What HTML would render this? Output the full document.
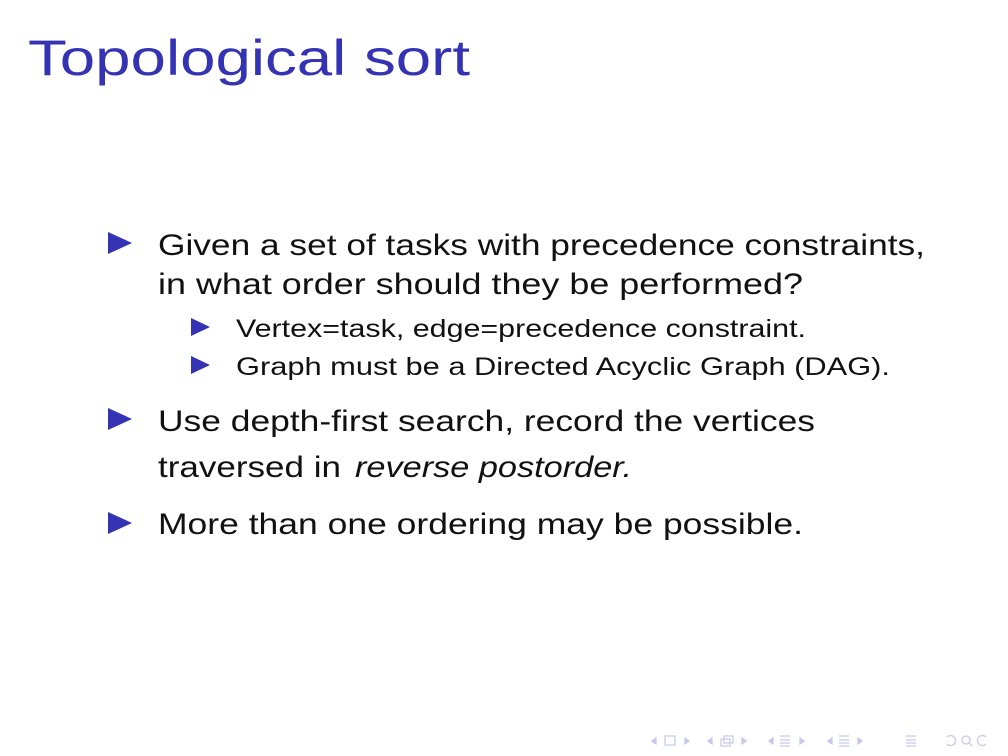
<!DOCTYPE html>
<html><head><style>
html,body{margin:0;padding:0;background:#fff;}
svg{display:block;}
text{font-family:"Liberation Sans",sans-serif;}
</style></head><body>
<svg width="1008" height="756" viewBox="0 0 1008 756" xmlns="http://www.w3.org/2000/svg">
<text x="28" y="75" font-size="50" fill="#3333b3" textLength="442" lengthAdjust="spacingAndGlyphs">Topological sort</text>
<g fill="#3333b3">
<polygon points="108,232 132,243 108,254"/>
<polygon points="108,408 132,419 108,430"/>
<polygon points="108,512 132,523 108,534"/>
<polygon points="191,318 210,327 191,336"/>
<polygon points="191,356 210,365 191,374"/>
</g>
<g fill="#111" font-size="30">
<text x="158" y="255" textLength="767" lengthAdjust="spacingAndGlyphs">Given a set of tasks with precedence constraints,</text>
<text x="158" y="294" textLength="645" lengthAdjust="spacingAndGlyphs">in what order should they be performed?</text>
<text x="158" y="431" textLength="657" lengthAdjust="spacingAndGlyphs">Use depth-first search, record the vertices</text>
<text x="158" y="477" textLength="183" lengthAdjust="spacingAndGlyphs">traversed in</text>
<text x="355" y="477" font-style="italic" textLength="277" lengthAdjust="spacingAndGlyphs">reverse postorder.</text>
<text x="158" y="534" textLength="645" lengthAdjust="spacingAndGlyphs">More than one ordering may be possible.</text>
</g>
<g fill="#111" font-size="25">
<text x="236" y="337" textLength="570" lengthAdjust="spacingAndGlyphs">Vertex=task, edge=precedence constraint.</text>
<text x="236" y="375" textLength="654" lengthAdjust="spacingAndGlyphs">Graph must be a Directed Acyclic Graph (DAG).</text>
</g>
<g stroke="#c8c8ec" fill="none" stroke-width="1.3">
<polygon points="656,738 652,741 656,744" fill="#c8c8ec"/>
<rect x="665" y="736" width="10" height="9"/>
<polygon points="685,738 689,741 685,744" fill="#c8c8ec"/>
<polygon points="712,738 708,741 712,744" fill="#c8c8ec"/>
<rect x="721" y="739" width="9" height="7"/><rect x="724" y="736" width="9" height="7"/>
<polygon points="742,738 746,741 742,744" fill="#c8c8ec"/>
<polygon points="773,738 769,741 773,744" fill="#c8c8ec"/>
<path d="M780 736h10M780 740h10M780 743h10M780 746h10"/>
<polygon points="800,738 804,741 800,744" fill="#c8c8ec"/>
<polygon points="832,738 828,741 832,744" fill="#c8c8ec"/>
<path d="M839 736h10M839 740h10M839 743h10M839 746h10"/>
<polygon points="858,738 862,741 858,744" fill="#c8c8ec"/>
<path d="M906 736h10M906 740h10M906 743h10M906 746h10"/>
<path d="M947 737a5 5 0 1 1 0 7"/>
<circle cx="966" cy="740" r="4"/><path d="M969 743l3 3"/>
<path d="M986 744a5 5 0 1 1 0-7"/>
</g>
</svg>
</body></html>
